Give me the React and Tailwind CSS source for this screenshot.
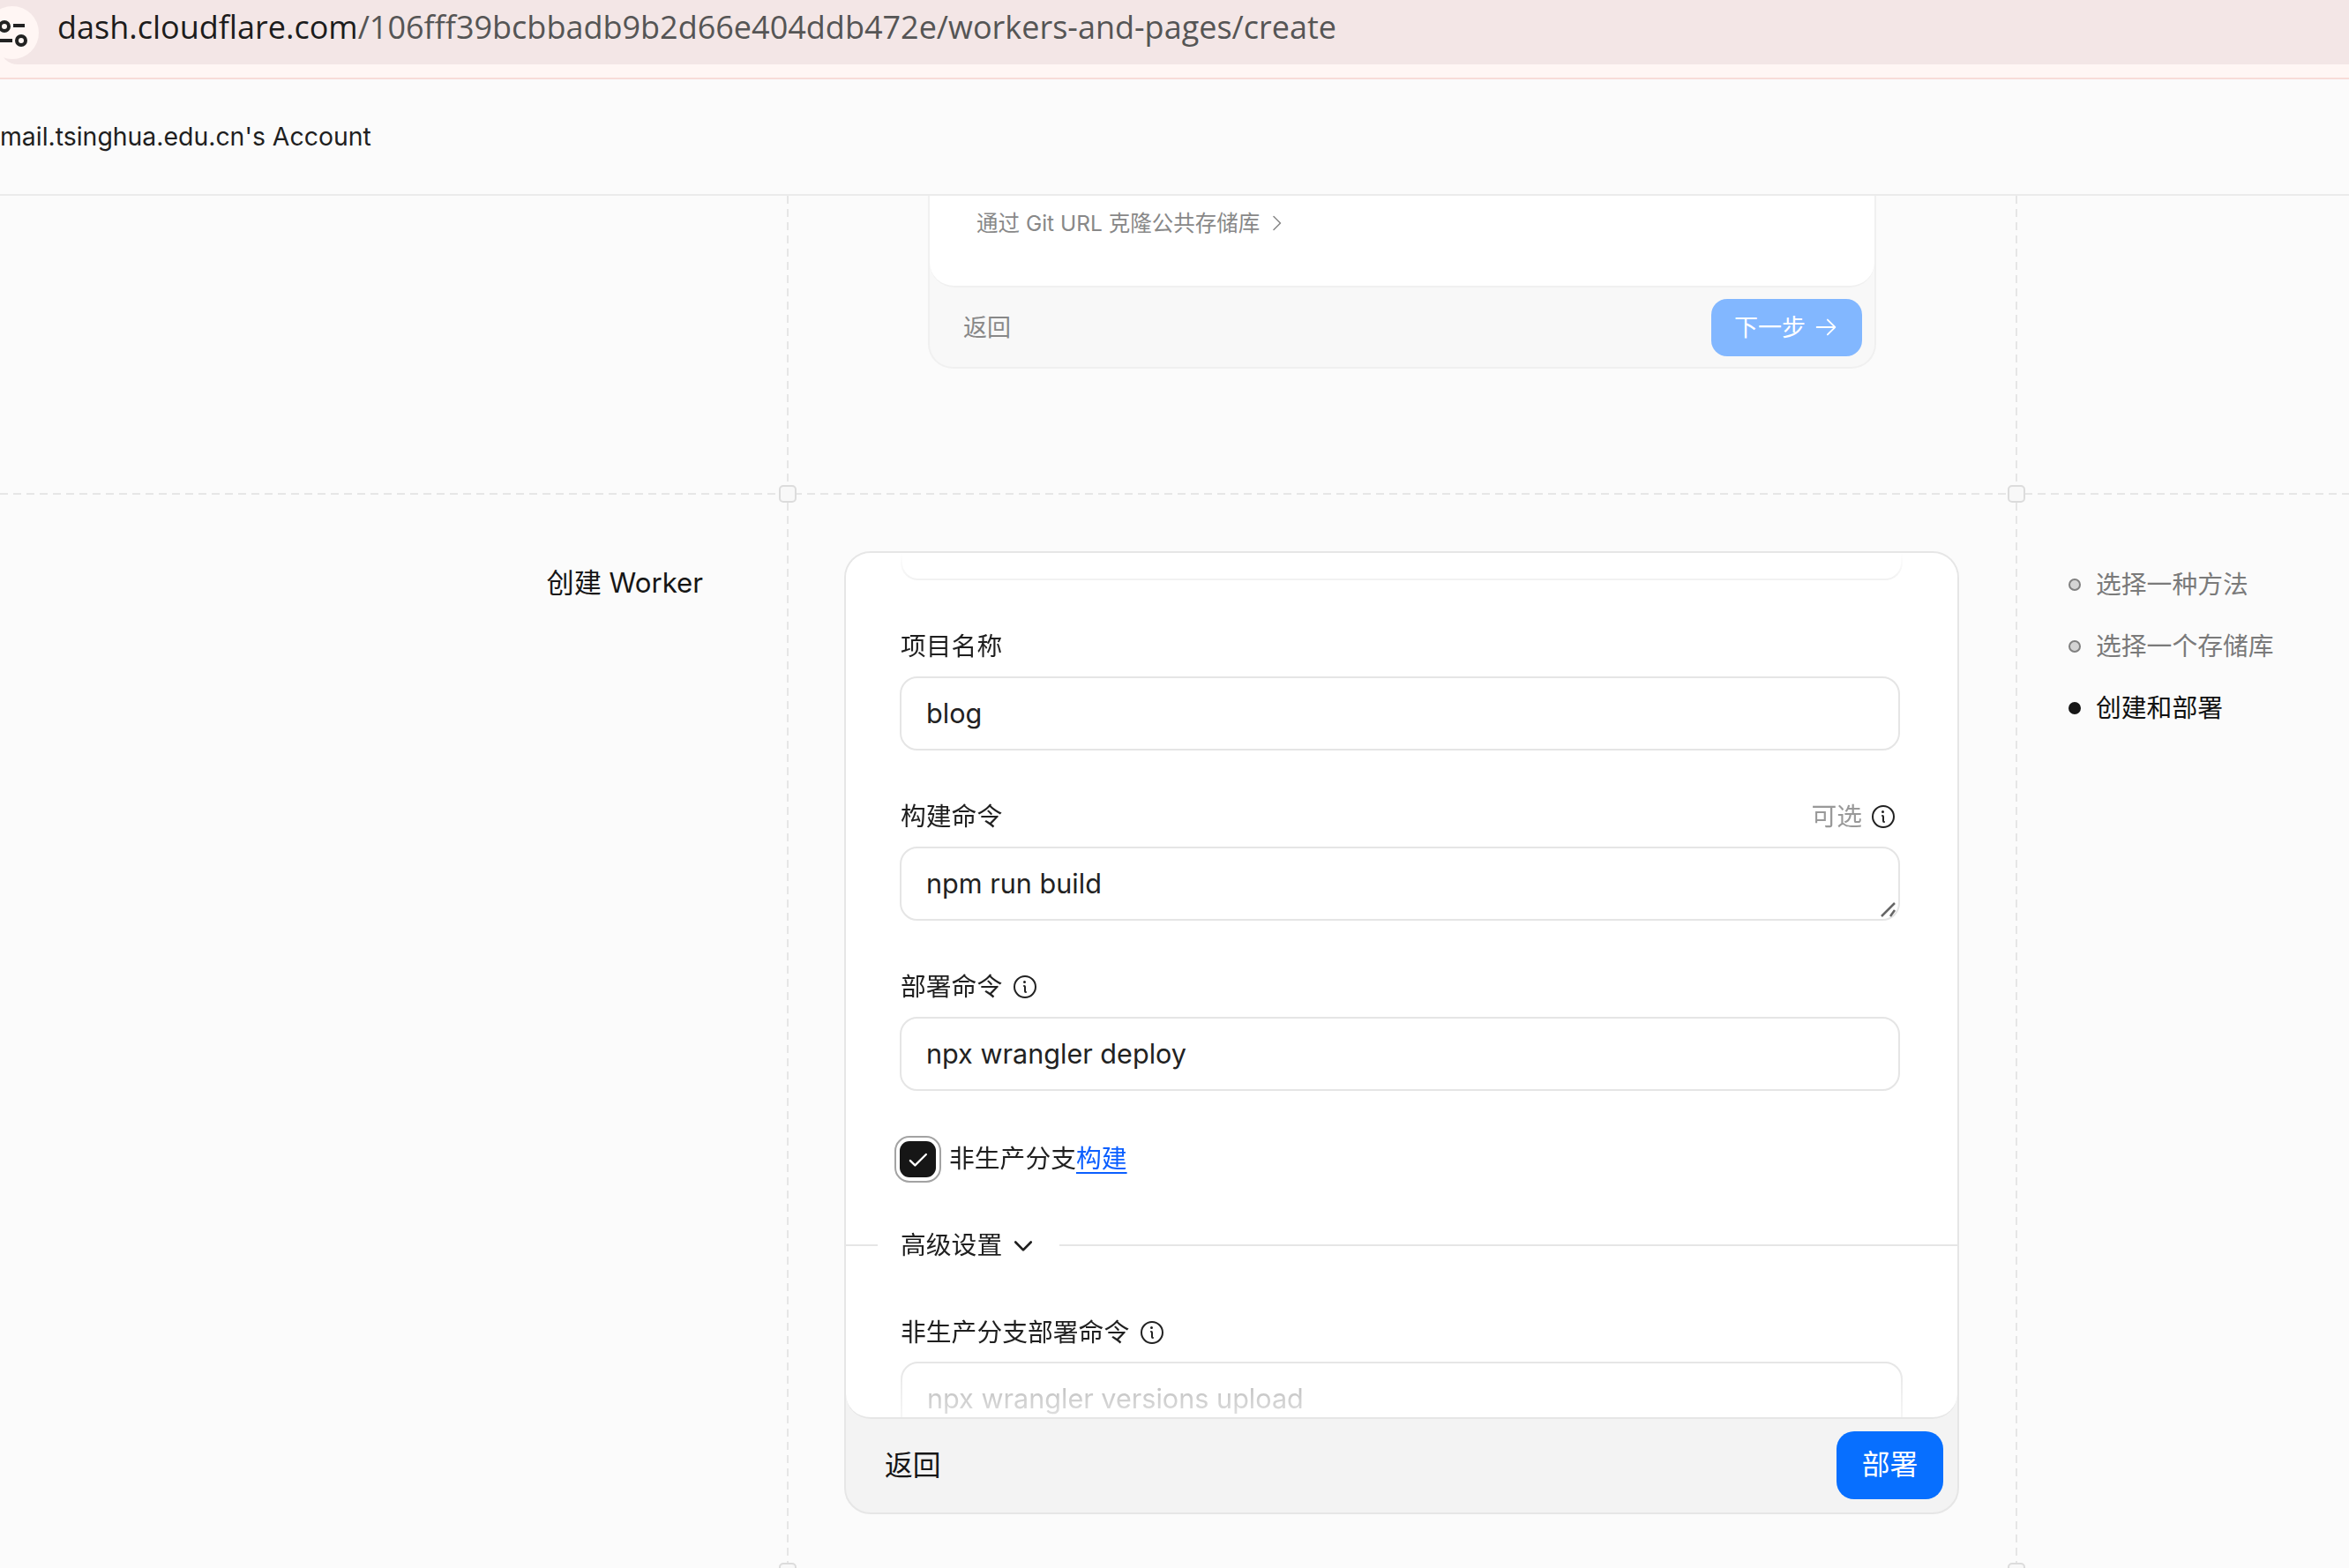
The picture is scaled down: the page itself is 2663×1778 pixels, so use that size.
import React from "react";
import { PiArrowRight, PiCaretDownBold, PiCaretRight, PiCheckBold, PiInfo } from "react-icons/pi";

const dashV =
  "absolute w-[2px] bg-[repeating-linear-gradient(to_bottom,#e6e6e6_0,#e6e6e6_9px,transparent_9px,transparent_15px)]";

const Handle = ({ className }) => (
  <div
    className={`absolute w-[20px] h-[20px] rounded-[5px] border-2 border-[#dcdcdc] bg-[#f8f8f8] ${className}`}
  />
);

const Label = ({ children, right, info }) => (
  <div className="flex items-center justify-between h-[34px] pl-[1px]">
    <div className="flex items-center gap-[10px]">
      <span>{children}</span>
      {info && <PiInfo size={32} className="text-[#222]" />}
    </div>
    {right}
  </div>
);

const Field = ({ label, value, right, info, handle }) => (
  <div className="mb-[58px]">
    <Label right={right} info={info}>
      {label}
    </Label>
    <div className="relative flex items-center h-[84px] mt-[17px] px-[28px] rounded-[20px] border-2 border-[#e5e5e5] bg-white text-[30.6px] text-[#222]">
      {value}
      {handle && (
        <svg className="absolute right-[1px] bottom-[1px]" width="20" height="20" viewBox="0 0 20 20">
          <path d="M2 18 L17 3 M12 18 L17 11" stroke="#666" strokeWidth="2.5" />
        </svg>
      )}
    </div>
  </div>
);

const Steps = () => {
  const steps = [
    { text: "选择一种方法" },
    { text: "选择一个存储库" },
    { text: "创建和部署", active: true },
  ];
  return (
    <div className="flex flex-col gap-[30px] pt-[83px] pl-[59px]">
      {steps.map((s) => (
        <div key={s.text} className={`flex items-center gap-[17px] h-[40px] ${s.active ? "text-[#111]" : "text-[#7a7a7a]"}`}>
          <span
            className={`w-[14px] h-[14px] rounded-full border-2 ${
              s.active ? "bg-[#161616] border-[#161616]" : "bg-[#d4d4d4] border-[#808080]"
            }`}
          />
          {s.text}
        </div>
      ))}
    </div>
  );
};

const App = () => {
  return (
    <div className="w-[2663px] h-[1778px] overflow-hidden bg-[#fbfbfb] text-[28.8px] text-[#1f1f1f] font-['Inter','Noto_Sans_CJK_SC',sans-serif]">
      {/* browser address bar */}
      <div className="h-[88px] bg-[#fff6f4]">
        <div className="flex items-center gap-[21px] h-[73px] rounded-bl-[20px] bg-[#f3e6e6]">
          <div className="flex items-center justify-center shrink-0 w-[60px] h-[60px] -ml-[16px] rounded-full bg-[#fff6f4]">
            <svg width="60" height="60" viewBox="0 0 60 60" fill="none" stroke="#222" strokeWidth="4">
              <circle cx="21" cy="23" r="5" />
              <path d="M31 22 H44" />
              <path d="M16 39 H30" />
              <circle cx="40" cy="39" r="5" />
            </svg>
          </div>
          <div className="pb-[11px] text-[36px] text-[#555] font-['Open_Sans',sans-serif]">
            <span className="text-[#1c1c1c]">dash.cloudflare.com</span>
            /106fff39bcbbadb9b2d66e404ddb472e/workers-and-pages/create
          </div>
        </div>
      </div>
      <div className="h-[2px] bg-[#f8dcd8]" />

      {/* account header */}
      <div className="flex items-center h-[132px] border-b-2 border-[#ebebeb] text-[28.4px]">
        mail.tsinghua.edu.cn's Account
      </div>

      {/* previous step, scrolled out */}
      <div className="grid grid-cols-[893px_1393px_1fr] h-[338px]">
        <div />
        <div className="relative">
          <div className={`${dashV} -left-[1px] top-0 bottom-[10px]`} />
          <div className={`${dashV} -right-[1px] top-0 bottom-[10px]`} />
          <div className="w-[1075px] h-[196px] mx-auto flex flex-col rounded-b-[28px] border-2 border-t-0 border-[#f0f0f0] bg-[#f8f8f8] text-[#888]">
            <div className="flex items-start gap-[7px] h-[104px] pt-[13px] pl-[53px] rounded-b-[28px] border-b-2 border-[#f0f0f0] bg-white text-[24.5px]">
              通过 Git URL 克隆公共存储库
              <PiCaretRight size={24} className="mt-[6px]" />
            </div>
            <div className="flex items-center justify-between flex-1 pl-[38px] pr-[14px] text-[27px]">
              <span className="pt-[2px]">返回</span>
              <div className="flex items-center justify-center gap-[8px] w-[171px] h-[65px] rounded-[18px] bg-[#82b7ff] text-white">
                <span className="pt-[2px]">下一步</span>
                <PiArrowRight size={30} />
              </div>
            </div>
          </div>
        </div>
        <div />
      </div>

      {/* create and deploy */}
      <div className="relative grid grid-cols-[893px_1393px_1fr] h-[1222px]">
        <div className="absolute left-0 right-0 -top-[1px] h-[2px] bg-[repeating-linear-gradient(to_right,#e6e6e6_0,#e6e6e6_9px,transparent_9px,transparent_15px)]" />
        <Handle className="left-[883px] -top-[10px]" />
        <Handle className="left-[2276px] -top-[10px]" />
        <Handle className="left-[883px] top-[1212px]" />
        <Handle className="left-[2276px] top-[1212px]" />

        <div className="pt-[81px] pr-[96px] text-right text-[31.2px] leading-[40px] text-[#161616]">创建 Worker</div>

        <div className="relative pt-[65px]">
          <div className={`${dashV} -left-[1px] top-[10px] bottom-[10px]`} />
          <div className={`${dashV} -right-[1px] top-[10px] bottom-[10px]`} />
          <div className="w-[1264px] ml-[64px] rounded-[30px] border-2 border-[#e6e6e6] bg-[#f3f3f3] overflow-hidden">
            <div className="h-[982px] rounded-b-[28px] border-b-2 border-[#e6e6e6] bg-white overflow-hidden">
              <div className="pl-[61px] pr-[65px] [mask-image:linear-gradient(to_bottom,transparent_0,#000_60px,#000_915px,#0006_975px)]">
                <div className="h-[31px] w-[1136px] mb-[58px] ml-[1px] rounded-b-[20px] border-2 border-t-0 border-[#e5e5e5]" />
                <Field label="项目名称" value="blog" />
                <Field
                  label="构建命令"
                  value="npm run build"
                  handle
                  right={
                    <div className="flex items-center gap-[8px] pr-[3px] text-[#999]">
                      可选
                      <PiInfo size={32} className="text-[#222]" />
                    </div>
                  }
                />
                <Field label="部署命令" value="npx wrangler deploy" info />

                <div className="flex items-center gap-[15px] h-[42px] -mt-[2px]">
                  <div className="flex items-center justify-center w-[41px] h-[41px] rounded-[11px] bg-[#161616] text-white outline-2 outline-offset-[4px] outline-[#a3a3a3]">
                    <PiCheckBold size={25} />
                  </div>
                  <div>
                    非生产分支<span className="text-[#0b5fff] underline underline-offset-[5px]">构建</span>
                  </div>
                </div>

                <div className="flex items-center h-[34px] mt-[60px] -ml-[61px] -mr-[65px]">
                  <div className="w-[36px] h-[2px] bg-[#e6e6e6]" />
                  <div className="flex items-center gap-[10px] pl-[26px] pr-[27px]">
                    高级设置
                    <PiCaretDownBold size={28} />
                  </div>
                  <div className="flex-1 h-[2px] bg-[#e6e6e6]" />
                </div>

                <div className="mt-[65px]">
                  <Label info>非生产分支部署命令</Label>
                  <div className="flex items-center w-[1136px] h-[84px] mt-[16px] ml-[1px] px-[28px] rounded-[20px] border-2 border-[#e5e5e5] text-[30.6px] text-[#a8a8a8]">
                    npx wrangler versions upload
                  </div>
                </div>
              </div>
            </div>
            <div className="flex items-center justify-between h-[106px] pl-[44px] pr-[16px] text-[31.8px] text-[#161616]">
              返回
              <div className="flex items-center justify-center w-[121px] h-[77px] -mt-[2px] rounded-[20px] bg-[#076fff] text-[31.8px] text-white">
                部署
              </div>
            </div>
          </div>
        </div>

        <Steps />
      </div>
    </div>
  );
};

export default App;
